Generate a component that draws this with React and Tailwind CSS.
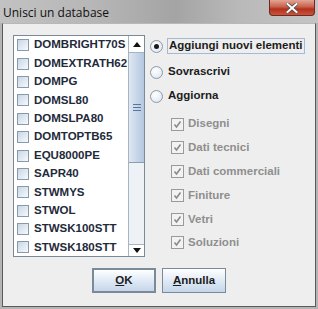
import React from "react";

const items = [
  "DOMBRIGHT70S",
  "DOMEXTRATH62",
  "DOMPG",
  "DOMSL80",
  "DOMSLPA80",
  "DOMTOPTB65",
  "EQU8000PE",
  "SAPR40",
  "STWMYS",
  "STWOL",
  "STWSK100STT",
  "STWSK180STT",
];

const options = ["Disegni", "Dati tecnici", "Dati commerciali", "Finiture", "Vetri", "Soluzioni"];

function Box() {
  return (
    <span className="w-[12px] h-[12px] shrink-0 border border-[#8799ad] bg-[linear-gradient(135deg,#c9d6e6,#f7f9fc)]" />
  );
}

function CheckedBox() {
  return (
    <span className="w-[13px] h-[13px] shrink-0 border border-[#9a9a9a] bg-[#f2f2f2] flex items-center justify-center">
      <svg width="9" height="9" viewBox="0 0 9 9">
        <path d="M1.5 4.5 L3.5 7 L7.5 1.5" fill="none" stroke="#8a8a8a" strokeWidth="1.6" />
      </svg>
    </span>
  );
}

function Radio({ on }) {
  return (
    <span className="w-[13px] h-[13px] shrink-0 rounded-full border border-[#8a9aab] bg-[radial-gradient(circle_at_40%_35%,#ffffff,#d8e2ee)] flex items-center justify-center">
      {on && <span className="w-[5px] h-[5px] rounded-full bg-[#1a1a1a]" />}
    </span>
  );
}

export default function App() {
  return (
    <div
      className="w-[318px] h-[309px] flex flex-col bg-[#b4b4b4] overflow-hidden"
      style={{ fontFamily: '"Liberation Sans", Arial, sans-serif' }}
    >
      <div className="h-[23px] shrink-0 flex items-start justify-between bg-[linear-gradient(90deg,#c2c2c2_0%,#b6b6b6_30%,#a4a4a4_55%,#b9b9b9_75%,#c4c4c4_100%)]">
        <span className="pl-[3px] pt-[4px] text-[12px] text-[#111]" style={{ fontFamily: '"Open Sans", "DejaVu Sans", sans-serif' }}>
          Unisci un database
        </span>
        <div className="mr-[3px] w-[46px] h-[16px] rounded-b-[4px] border border-t-0 border-[#6e2a22] bg-[linear-gradient(180deg,#e4a595_0%,#c8624e_45%,#b3301c_60%,#c8553f_100%)] flex items-center justify-center">
          <svg width="12" height="10" viewBox="0 0 12 10">
            <path d="M1.5 1 L10.5 9 M10.5 1 L1.5 9" stroke="#4a4a4a" strokeWidth="3.4" strokeLinecap="square" />
            <path d="M1.5 1 L10.5 9 M10.5 1 L1.5 9" stroke="#ffffff" strokeWidth="2" strokeLinecap="square" />
          </svg>
        </div>
      </div>

      <div className="flex-1 px-[2px] pb-[2px] flex">
        <div className="flex-1 flex flex-col bg-[#eeeeee] border border-[#5a5a5a] border-t-[#b8b8b8] pl-[10px] pt-[11px]">
          <div className="flex">
            <div className="w-[132px] h-[222px] border border-[#7b8a99] bg-white flex overflow-hidden">
              <div className="flex-1 flex flex-col overflow-hidden">
                {items.map((name) => (
                  <div key={name} className="h-[18.4px] shrink-0 flex items-center pl-[3px] gap-[5px]">
                    <Box />
                    <span className="text-[11.5px] font-bold text-[#222a3a] leading-none">{name}</span>
                  </div>
                ))}
                <div className="h-[18.4px] shrink-0 flex items-center pl-[3px]">
                  <Box />
                </div>
              </div>
              <div className="w-[16px] shrink-0 border-l border-[#a8b4c2] flex flex-col bg-[#eef2f7]">
                <div className="h-[17px] shrink-0 bg-white border-b border-[#a8b4c2] flex items-center justify-center">
                  <svg width="8" height="5" viewBox="0 0 8 5"><path d="M0 5 L4 0 L8 5 Z" fill="#111" /></svg>
                </div>
                <div className="h-[110px] shrink-0 border-b border-[#8a9cb0] bg-[linear-gradient(90deg,#dfe8f3,#c4d4e8_60%,#b4c8e0)] flex flex-col items-center justify-center gap-[2px]">
                  <span className="w-[8px] h-px bg-[#5a76a0]" />
                  <span className="w-[8px] h-px bg-[#5a76a0]" />
                  <span className="w-[8px] h-px bg-[#5a76a0]" />
                </div>
                <div className="flex-1" />
                <div className="h-[12px] shrink-0 bg-white border-t border-[#a8b4c2] flex items-center justify-center">
                  <svg width="8" height="5" viewBox="0 0 8 5"><path d="M0 0 L4 5 L8 0 Z" fill="#111" /></svg>
                </div>
              </div>
            </div>

            <div className="ml-[5px] flex flex-col text-[11.5px] font-bold">
              <div className="mt-[3px] h-[16px] flex items-center gap-[4px]">
                <Radio on />
                <span className="border border-[#a3b9d4] px-[1px] h-[16px] flex items-center text-[#1c1c1c]">
                  Aggiungi nuovi elementi
                </span>
              </div>
              <div className="mt-[10px] h-[16px] flex items-center gap-[5px]">
                <Radio />
                <span className="text-[#1c1c1c]">Sovrascrivi</span>
              </div>
              <div className="mt-[8px] h-[16px] flex items-center gap-[5px]">
                <Radio />
                <span className="text-[#1c1c1c]">Aggiorna</span>
              </div>
              <div className="mt-[12px] pl-[21px] flex flex-col gap-[7.8px]">
                {options.map((o) => (
                  <div key={o} className="h-[16px] flex items-center gap-[4px]">
                    <CheckedBox />
                    <span className="text-[#8e8e8e]">{o}</span>
                  </div>
                ))}
              </div>
            </div>
          </div>

          <div className="mt-[11px] pr-[10px] flex justify-center gap-[6px] text-[11.5px] font-bold text-[#1c1c1c]">
            <button className="w-[64px] h-[25px] border-2 border-[#7a8a99] bg-[linear-gradient(180deg,#ffffff,#dde8f4_55%,#c6d6ea)] flex items-center justify-center">
              <span><span className="underline">O</span>K</span>
            </button>
            <button className="w-[64px] h-[25px] border border-[#7a8a99] bg-[linear-gradient(180deg,#ffffff,#dde8f4_55%,#c6d6ea)] flex items-center justify-center">
              <span><span className="underline">A</span>nnulla</span>
            </button>
          </div>
        </div>
      </div>
    </div>
  );
}
